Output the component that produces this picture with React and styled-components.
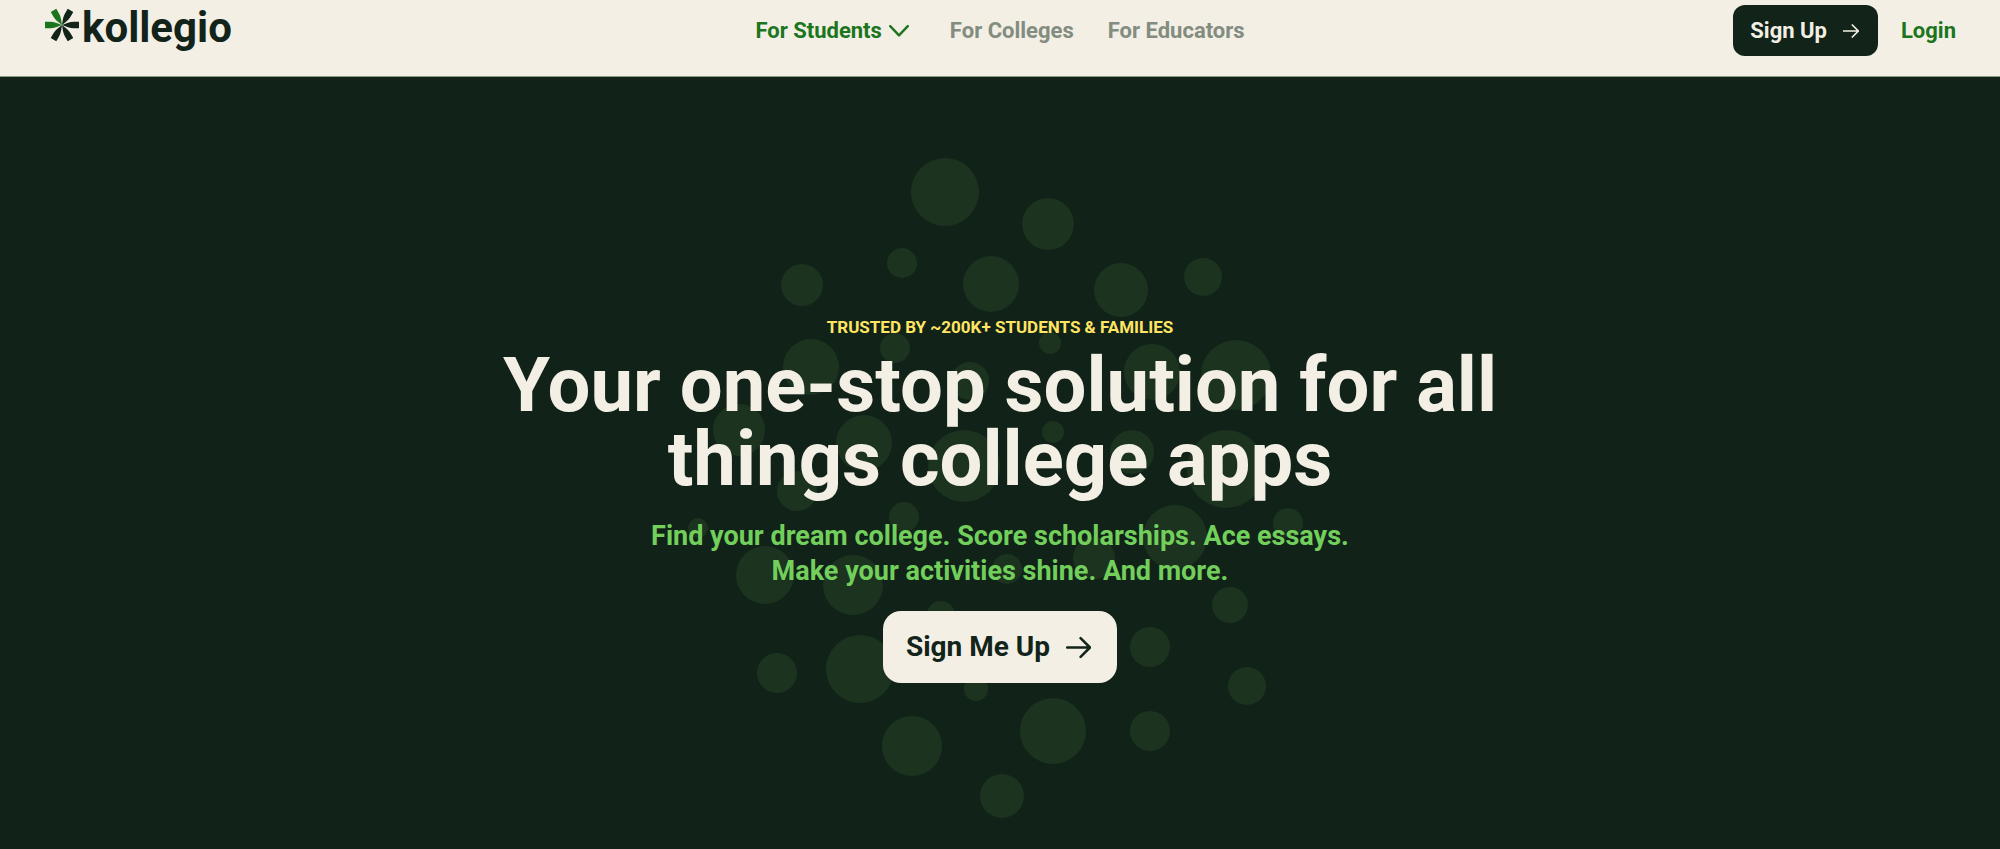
import styled, { createGlobalStyle } from "styled-components";

const colors = {
  cream: "#f3efe4",
  forest: "#12241a",
  night: "#112219",
  dot: "#1c331f",
  green: "#1b751d",
  lime: "#72cf5b",
  yellow: "#ffe562",
  muted: "#828c80",
};

const dots = [
  [945, 192, 34],
  [1048, 224, 26],
  [902, 263, 15],
  [802, 285, 21],
  [991, 284, 28],
  [1121, 290, 27],
  [1203, 277, 19],
  [895, 348, 15],
  [1050, 343, 11],
  [811, 367, 28],
  [970, 381, 19],
  [1152, 372, 28],
  [1236, 375, 35],
  [739, 430, 26],
  [864, 443, 28],
  [964, 466, 36],
  [1053, 432, 11],
  [1132, 452, 22],
  [1226, 469, 39],
  [797, 491, 20],
  [904, 517, 15],
  [698, 528, 10],
  [1175, 537, 32],
  [1288, 523, 15],
  [765, 575, 29],
  [853, 585, 30],
  [1007, 569, 15],
  [1094, 558, 21],
  [941, 615, 14],
  [1230, 605, 18],
  [1150, 647, 20],
  [777, 673, 20],
  [860, 669, 34],
  [976, 689, 12],
  [1247, 686, 19],
  [1053, 731, 33],
  [912, 746, 30],
  [1150, 731, 20],
  [1002, 796, 22],
];

const petals = [0, 60, 120, 180, 240, 300];

function LogoMark() {
  return (
    <svg width="36" height="40" viewBox="-18 -20 36 40" aria-hidden="true">
      {petals.map((angle) => (
        <path
          key={angle}
          d="M0 0 L6 -2.3 Q9 -3.2 11.5 -3.2 H17 V3.2 H11.5 Q9 3.2 6 2.3 Z"
          fill={angle === 180 || angle === 240 ? colors.green : colors.forest}
          transform={`rotate(${angle})`}
        />
      ))}
    </svg>
  );
}

function Chevron() {
  return (
    <svg width="20" height="12" viewBox="0 0 20 12" fill="none" aria-hidden="true">
      <path
        d="M1.2 1.2 L10 10.4 L18.8 1.2"
        stroke="currentColor"
        strokeWidth="2.4"
        strokeLinecap="round"
        strokeLinejoin="round"
      />
    </svg>
  );
}

function Arrow({ size, stroke }) {
  return (
    <svg width={size} height={size} viewBox="0 0 24 24" fill="none" aria-hidden="true">
      <path
        d="M1 12 H23 M14 3 L23 12 L14 21"
        stroke="currentColor"
        strokeWidth={stroke}
        strokeLinecap="round"
        strokeLinejoin="round"
      />
    </svg>
  );
}

function Header() {
  return (
    <Bar>
      <Logo href="#">
        <LogoMark />
        kollegio
      </Logo>
      <Nav>
        <NavButton type="button">
          For Students
          <Chevron />
        </NavButton>
        <NavLink href="#colleges">For Colleges</NavLink>
        <NavLink href="#educators">For Educators</NavLink>
      </Nav>
      <Actions>
        <SignUp type="button">
          Sign Up
          <Arrow size={16} stroke={2.6} />
        </SignUp>
        <Login href="#login">Login</Login>
      </Actions>
    </Bar>
  );
}

function Hero() {
  return (
    <Stage>
      <Dots width="640" height="700" viewBox="680 140 640 700" aria-hidden="true">
        {dots.map(([x, y, r]) => (
          <circle key={`${x}-${y}`} cx={x} cy={y} r={r} fill={colors.dot} />
        ))}
      </Dots>
      <Content>
        <Eyebrow>TRUSTED BY ~200K+ STUDENTS &amp; FAMILIES</Eyebrow>
        <Title>Your one-stop solution for all things college apps</Title>
        <Subtitle>
          Find your dream college. Score scholarships. Ace essays. Make your
          activities shine. And more.
        </Subtitle>
        <CallToAction type="button">
          Sign Me Up
          <Arrow size={25} stroke={2.4} />
        </CallToAction>
      </Content>
    </Stage>
  );
}

export default function App() {
  return (
    <>
      <GlobalStyle />
      <Page>
        <Header />
        <Hero />
      </Page>
    </>
  );
}

// --- Styled Components ---

const GlobalStyle = createGlobalStyle`
  * {
    box-sizing: border-box;
    margin: 0;
  }

  body {
    background: ${colors.night};
    font-family: Roboto, "Liberation Sans", sans-serif;
    font-weight: 700;
  }

  a {
    text-decoration: none;
  }

  button {
    border: 0;
    padding: 0;
    font: inherit;
    cursor: pointer;
  }

  svg {
    flex-shrink: 0;
  }
`;

const Page = styled.div`
  display: flex;
  flex-direction: column;
  min-height: 100vh;
`;

const Bar = styled.header`
  display: grid;
  grid-template-columns: 1fr auto 1fr;
  align-items: center;
  padding: 5px 44px 20px;
  background: ${colors.cream};
  border-bottom: 1px solid #8b9a87;
  font-size: 22px;
  line-height: 29px;
`;

const Logo = styled.a`
  display: flex;
  align-self: start;
  gap: 2px;
  color: ${colors.forest};
  font-size: 42px;
  line-height: 46px;
`;

const Nav = styled.nav`
  display: flex;
  align-items: center;
  gap: 34px;
`;

const NavLink = styled.a`
  color: ${colors.muted};
`;

const NavButton = styled.button`
  display: flex;
  align-items: center;
  gap: 7px;
  margin-right: 7px;
  background: none;
  color: ${colors.green};
`;

const Actions = styled.div`
  display: flex;
  align-items: center;
  justify-content: flex-end;
  gap: 23px;
`;

const SignUp = styled.button`
  display: flex;
  align-items: center;
  gap: 16px;
  padding: 11px 19px 11px 17px;
  border-radius: 12px;
  background: ${colors.forest};
  color: ${colors.cream};
`;

const Login = styled.a`
  color: ${colors.green};
`;

const Stage = styled.main`
  position: relative;
  flex: 1;
  padding: 240px 24px 160px;
  background: ${colors.night};
  overflow: hidden;
`;

/* decorative backdrop behind the hero copy */
const Dots = styled.svg`
  position: absolute;
  top: 63px;
  left: 50%;
  transform: translateX(-50%);
`;

const Content = styled.div`
  position: relative;
  display: flex;
  flex-direction: column;
  align-items: center;
  text-align: center;
`;

const Eyebrow = styled.p`
  color: ${colors.yellow};
  font-size: 17px;
  line-height: 20px;
`;

const Title = styled.h1`
  max-width: 1080px;
  margin-top: 11px;
  color: ${colors.cream};
  font-size: 76px;
  font-weight: 700;
  line-height: 74px;
`;

const Subtitle = styled.p`
  max-width: 760px;
  margin-top: 23px;
  color: ${colors.lime};
  font-size: 27px;
  line-height: 35px;
`;

const CallToAction = styled.button`
  display: flex;
  align-items: center;
  gap: 16px;
  margin-top: 22px;
  padding: 19px 26px 19px 23px;
  border-radius: 18px;
  background: ${colors.cream};
  color: ${colors.forest};
  font-size: 28px;
  line-height: 34px;
`;
